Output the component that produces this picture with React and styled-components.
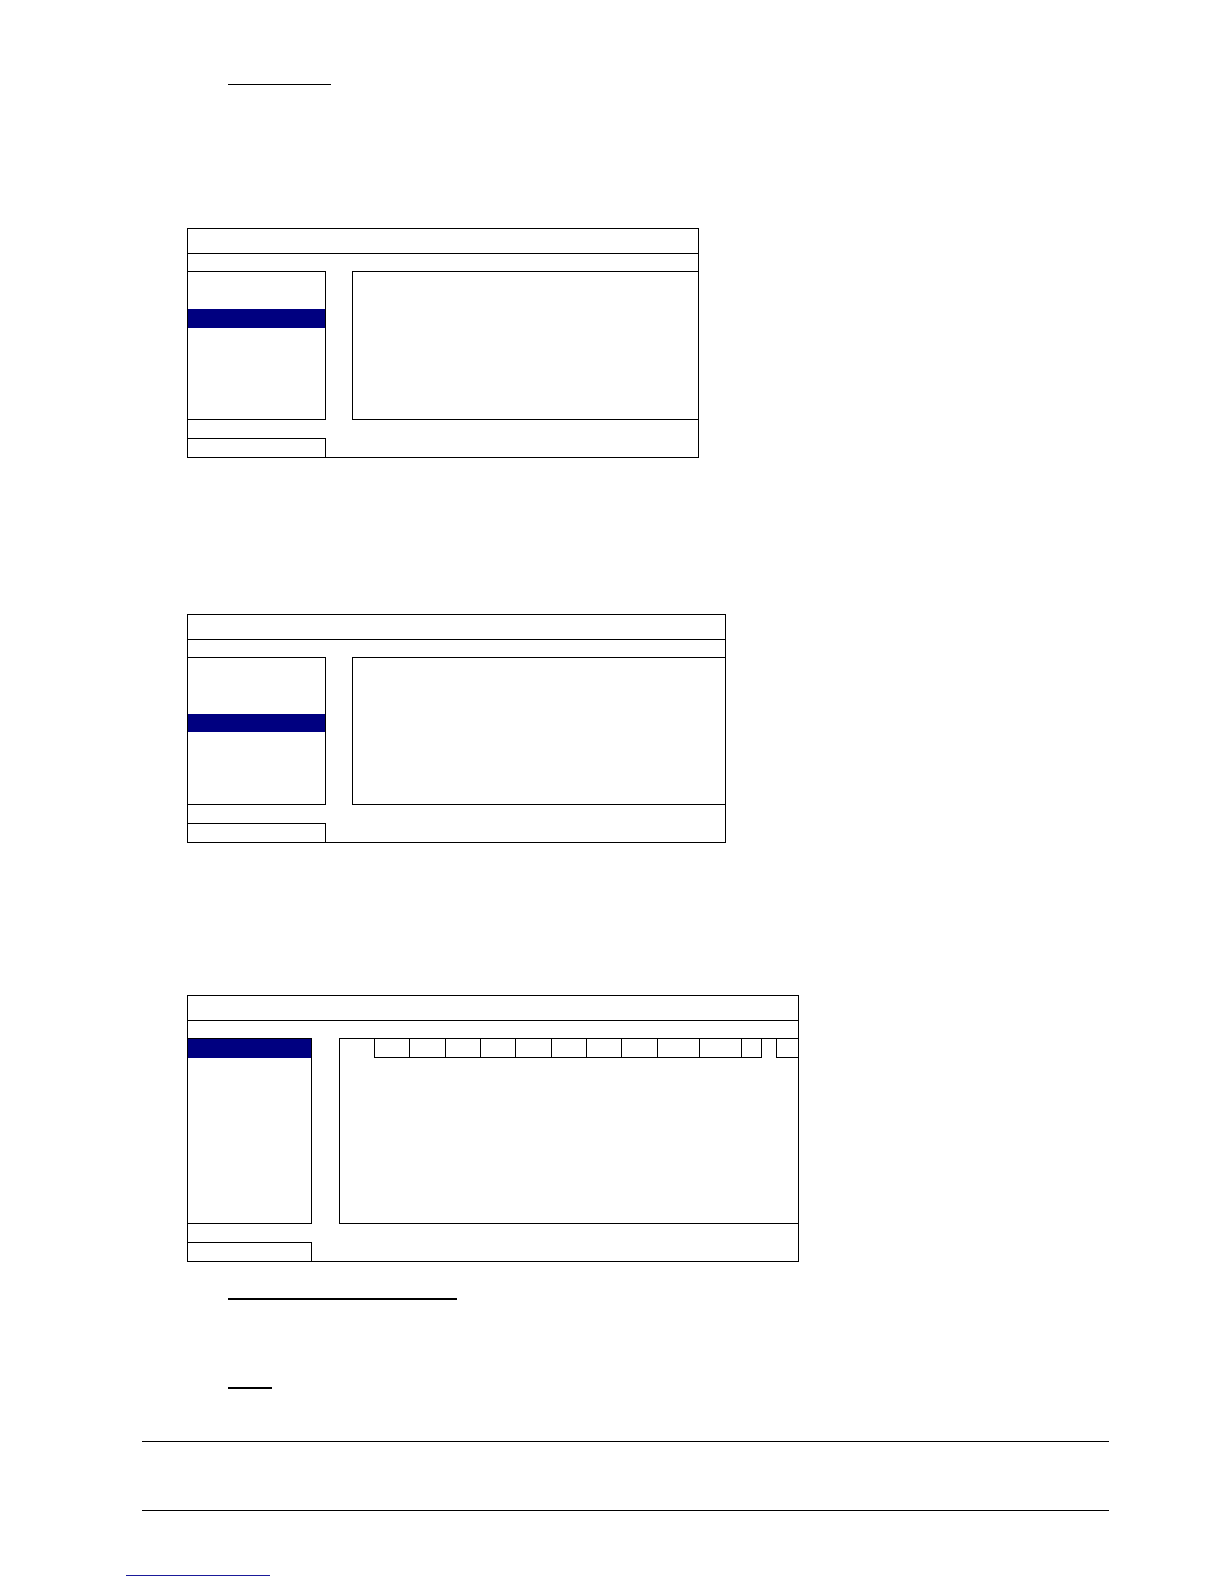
import React from "react";
import styled, { createGlobalStyle } from "styled-components";

const GlobalStyle = createGlobalStyle`
  html, body { margin: 0; padding: 0; background: #fff; }
  body { font-family: "Liberation Sans", Arial, sans-serif; }
`;

const Page = styled.div`
  display: flow-root;
  width: 1224px;
  min-height: 1584px;
  background: #fff;
`;

const Rule = styled.div`
  margin-top: ${(p) => p.$mt}px;
  margin-left: ${(p) => p.$ml}px;
  width: ${(p) => p.$w}px;
  height: ${(p) => p.$t || 1}px;
  background: ${(p) => p.$color || "#000"};
`;

const Frame = styled.div`
  box-sizing: border-box;
  width: ${(p) => p.$w}px;
  margin: ${(p) => p.$mt}px 0 0 187px;
  border: 1px solid #000;
  display: flex;
  flex-direction: column;
`;

const TitleBar = styled.div`
  height: 24px;
  border-bottom: 1px solid #000;
`;

const SubBar = styled.div`
  height: 17px;
`;

const Body = styled.div`
  display: flex;
  gap: ${(p) => p.$gap}px;
`;

const Menu = styled.div`
  width: ${(p) => p.$w - 1}px;
  height: ${(p) => p.$h}px;
  border: 1px solid #000;
  border-left: none;
  display: flex;
  flex-direction: column;
  overflow: hidden;
`;

const MenuItem = styled.div`
  height: 18.5px;
  flex: none;
  background: ${(p) => (p.$active ? "#000080" : "transparent")};
`;

const Panel = styled.div`
  flex: 1;
  height: ${(p) => p.$h}px;
  border: 1px solid #000;
  border-right: none;
  display: flex;
  flex-direction: column;
`;

const Spacer = styled.div`
  height: 18px;
`;

const Footer = styled.div`
  width: ${(p) => p.$w - 1}px;
  height: 18px;
  border-top: 1px solid #000;
  border-right: 1px solid #000;
`;

const CellRow = styled.div`
  display: flex;
  margin-left: 34px;
  height: 19px;
`;

const Cell = styled.div`
  box-sizing: border-box;
  width: ${(p) => (p.$w ? `${p.$w}px` : "auto")};
  flex: ${(p) => (p.$w ? "none" : "1")};
  border-left: 1px solid #000;
  border-bottom: 1px solid #000;
  border-right: ${(p) => (p.$end ? "1px solid #000" : "none")};
`;

const CellGap = styled.div`
  width: ${(p) => p.$w}px;
  flex: none;
`;

function MenuBox({ width, mt, leftWidth, gap, bodyHeight, rows, active, children }) {
  return (
    <Frame $w={width} $mt={mt}>
      <TitleBar />
      <SubBar />
      <Body $gap={gap}>
        <Menu $w={leftWidth} $h={bodyHeight}>
          {Array.from({ length: rows }).map((_, i) => (
            <MenuItem key={i} $active={i === active} />
          ))}
        </Menu>
        <Panel $h={bodyHeight}>{children}</Panel>
      </Body>
      <Spacer />
      <Footer $w={leftWidth} />
    </Frame>
  );
}

const cellWidths = [35, 36, 35, 35, 36, 35, 35, 36, 42, 42, 21];

export default function App() {
  return (
    <Page>
      <GlobalStyle />
      <Rule $mt={84} $ml={228} $w={103} />
      <MenuBox width={512} mt={143} leftWidth={138} gap={26} bodyHeight={147} rows={8} active={2} />
      <MenuBox width={539} mt={156} leftWidth={138} gap={26} bodyHeight={146} rows={8} active={3} />
      <MenuBox width={612} mt={152} leftWidth={124} gap={27} bodyHeight={184} rows={10} active={0}>
        <CellRow>
          {cellWidths.map((w, i) => (
            <Cell key={i} $w={w} $end={i === cellWidths.length - 1} />
          ))}
          <CellGap $w={14} />
          <Cell />
        </CellRow>
      </MenuBox>
      <Rule $mt={36} $ml={228} $w={229} $t={2} />
      <Rule $mt={87} $ml={228} $w={44} $t={2} />
      <Rule $mt={52} $ml={142} $w={967} />
      <Rule $mt={68} $ml={142} $w={967} />
      <Rule $mt={64} $ml={126} $w={144} $color="#1a1a9a" />
    </Page>
  );
}
